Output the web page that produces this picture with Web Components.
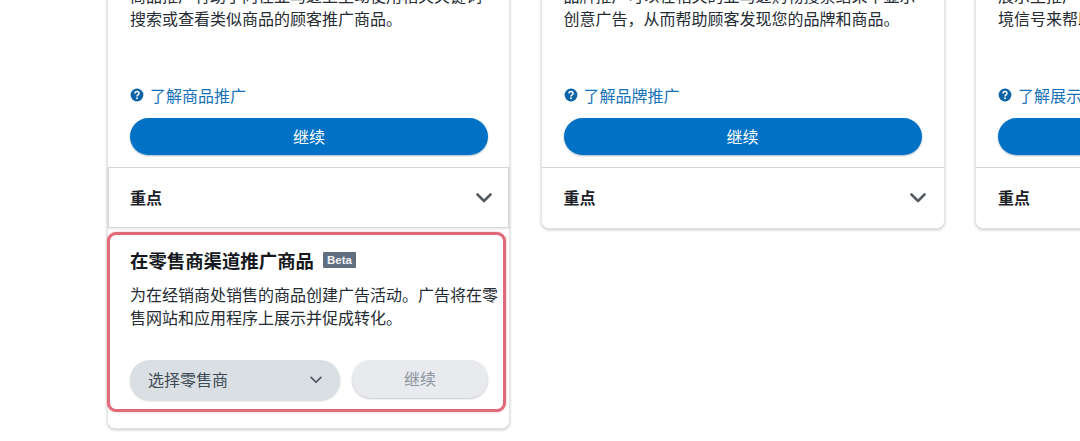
<!DOCTYPE html>
<html lang="zh"><head><meta charset="utf-8"><title>广告活动</title>
<style>
html,body{margin:0;height:441px;overflow:hidden;background:#fff}
body{font-family:"Noto Sans CJK SC","Liberation Sans",sans-serif;color:#1f2a33}
</style></head><body>
<ad-page>
  <ad-card tall>
    <span slot="desc">商品推广有助于向在亚马逊上主动使用相关关键词<br>搜索或查看类似商品的顾客推广商品。</span>
    <ad-link slot="link">了解商品推广</ad-link>
    <ad-highlights slot="row" framed></ad-highlights>
    <ad-retailer slot="extra"></ad-retailer>
  </ad-card>
  <ad-card>
    <span slot="desc">品牌推广可以在相关的亚马逊购物搜索结果中显示<br>创意广告，从而帮助顾客发现您的品牌和商品。</span>
    <ad-link slot="link">了解品牌推广</ad-link>
    <ad-highlights slot="row"></ad-highlights>
  </ad-card>
  <ad-card>
    <span slot="desc">展示型推广可以根据受众群体和购物环<br>境信号来帮助您吸引顾客。</span>
    <ad-link slot="link">了解展示型推广</ad-link>
    <ad-highlights slot="row"></ad-highlights>
  </ad-card>
</ad-page>
<script>
const def=(n,html)=>customElements.define(n,class extends HTMLElement{
  constructor(){super();this.attachShadow({mode:'open'}).innerHTML=html;}
});
const chev=(w,h,sw,c)=>`<svg width="${w}" height="${h}" viewBox="0 0 16 10" fill="none" stroke="${c}" stroke-width="${sw}" stroke-linecap="round" stroke-linejoin="round"><path d="M1.5 1.5 8 8l6.5-6.5"/></svg>`;

def('ad-page',`<style>
:host{display:grid;grid-template-columns:403px 404px 404px;column-gap:30.5px;align-items:start;
 width:1300px;margin-top:-101px;padding-left:107px}
</style><slot></slot>`);

def('ad-link',`<style>
:host{display:flex;align-items:center;gap:6px;height:22px;color:#1672b8;font-size:16px;line-height:22px;white-space:nowrap}
svg{flex:none}
</style><svg width="14" height="14" viewBox="0 0 14 14"><circle cx="7" cy="7" r="6.4" fill="#0b63a8"/><path d="M5 5.5C5 4.3 5.9 3.6 7 3.6s2 .7 2 1.8c0 1.5-2 1.5-2 3" fill="none" stroke="#fff" stroke-width="1.5"/><circle cx="7" cy="10.3" r=".95" fill="#fff"/></svg><span><slot></slot></span>`);

def('ad-button',`<style>
:host{display:flex;align-items:center;justify-content:center;box-sizing:border-box;height:37px;padding-bottom:2px;border-radius:19px;
 background:#0071c5;color:#fff;font-size:16px;box-shadow:0 1px 2px rgba(0,60,110,.35)}
:host([disabled]){height:38px;background:#e8eaed;color:#8a94a0;box-shadow:0 1px 2px rgba(60,70,80,.3)}
</style><slot></slot>`);

def('ad-highlights',`<style>
:host{display:flex;align-items:center;justify-content:space-between;box-sizing:border-box;height:61px;padding:0 18px 0 22px;
 border-top:1px solid #d5d8db;font-size:16px;font-weight:700;color:#1b2126}
:host([framed]){padding:0 16px 0 21px;border-left:1px solid #d5d8db;border-right:1px solid #d5d8db;border-bottom:1px solid #d5d8db;box-shadow:0 1px 2px rgba(0,0,0,.1)}
span{margin-bottom:2px}
</style><span>重点</span>${chev(16,10,2.6,'#555b60')}`);

def('ad-badge',`<style>
:host{display:inline-flex;align-items:center;justify-content:center;width:33px;height:16px;background:#616d80;color:#f2f4f6;
 font:700 11.5px/16px "Liberation Sans",sans-serif;border-radius:1px}
</style><slot></slot>`);

def('ad-select',`<style>
:host{display:flex;align-items:center;justify-content:space-between;box-sizing:border-box;width:210px;height:40px;padding:0 18px 2px 18px;border-radius:20px;
 background:#d9dfe2;color:#3d4a58;font-size:16px;box-shadow:0 1px 2px rgba(60,70,80,.25)}
svg{margin-top:2px}
</style><slot></slot>${chev(12,8,2.2,'#47535f')}`);

def('ad-retailer',`<style>
:host{display:block;box-sizing:border-box;width:399px;height:180px;margin:4px 0 0 -1px;padding:11px 0 8px 20px;
 border:3px solid #e0697a;border-radius:9px;background:#fff;box-shadow:0 0 2px rgba(224,105,122,.6)}
.t{display:flex;align-items:center;gap:9px;height:28px}
h3{margin:0;font-size:18.4px;line-height:28px;font-weight:700;color:#15191d}
p{margin:9px 0 0;font-size:16px;line-height:23px;color:#252c33;white-space:nowrap}
.a{display:flex;align-items:flex-start;gap:12px;margin-top:31px}
ad-button{width:136px}
</style><div class="t"><h3>在零售商渠道推广商品</h3><ad-badge>Beta</ad-badge></div>
<p>为在经销商处销售的商品创建广告活动。广告将在零<br>售网站和应用程序上展示并促成转化。</p>
<div class="a"><ad-select>选择零售商</ad-select><ad-button disabled>继续</ad-button></div>`);

def('ad-card',`<style>
:host{display:block;box-sizing:border-box;border:1px solid #e3e5e7;border-radius:8px;background:#fff;box-shadow:0 1px 3px rgba(0,0,0,.22)}
:host([tall]){padding-bottom:16px}
.b{box-sizing:border-box;height:267px;padding:84px 22px 12px 22px;display:flex;flex-direction:column}
:host([tall]) .b{padding-right:21px}
.d{font-size:16px;line-height:23px;color:#252c33;white-space:nowrap}
.l{margin-top:auto;margin-bottom:12px}
</style><div class="b"><div class="d"><slot name="desc"></slot></div><div class="l"><slot name="link"></slot></div><ad-button>继续</ad-button></div>
<slot name="row"></slot><slot name="extra"></slot>`);
</script>
</body></html>
